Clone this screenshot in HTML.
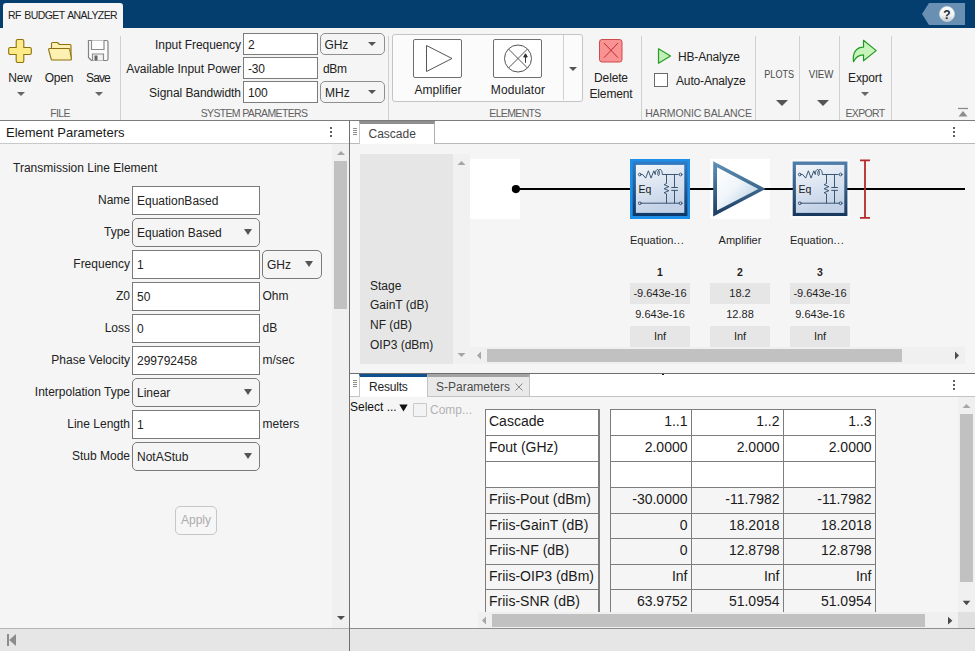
<!DOCTYPE html>
<html>
<head>
<meta charset="utf-8">
<title>RF Budget Analyzer</title>
<style>
html,body{margin:0;padding:0;}
body{width:975px;height:651px;overflow:hidden;position:relative;background:#f5f5f5;font-family:"Liberation Sans",sans-serif;font-size:12px;color:#1f1f1f;}
.a{position:absolute;white-space:nowrap;}
.ts{font-family:"Liberation Sans",sans-serif;font-size:12px;letter-spacing:-0.15px;color:#222;line-height:14px;}
.sec{font-size:10.5px;color:#616161;line-height:12px;letter-spacing:-0.65px;}
.sep{position:absolute;width:1px;background:#d0d0d0;top:36px;height:84px;}
.c{text-align:center;}
.r{text-align:right;}
.inp{position:absolute;box-sizing:border-box;background:#fff;border:1px solid #7c7c7c;}
.dd{position:absolute;box-sizing:border-box;background:#f5f5f5;border:1px solid #8f8f8f;border-radius:4px;}
.tri{position:absolute;width:0;height:0;border-left:4px solid transparent;border-right:4px solid transparent;border-top:4px solid #555;}
.lbl{font-size:12px;color:#222;line-height:14px;}
.cell{position:absolute;box-sizing:border-box;}
</style>
</head>
<body>
<!-- TITLE BAR -->
<div class="a" id="titlebar" style="left:0;top:0;width:975px;height:28px;background:#043e6f;"></div>
<div class="a" id="apptab" style="left:3px;top:3px;width:120px;height:26px;background:#f5f5f5;border-radius:3px 3px 0 0;"></div>
<div class="a ts" style="left:8px;top:8px;font-size:10.5px;letter-spacing:-0.6px;word-spacing:1.2px;color:#222;">RF BUDGET ANALYZER</div>
<!-- help button -->
<svg class="a" style="left:920px;top:2px;" width="48" height="25" viewBox="0 0 48 25">
  <defs><linearGradient id="hg" x1="0" y1="0" x2="0" y2="1"><stop offset="0" stop-color="#ffffff"/><stop offset="0.600" stop-color="#f0f0f0"/><stop offset="1" stop-color="#bfc4ca"/></linearGradient></defs>
  <polygon points="2,12 9,1 45,1 45,23 9,23" fill="#6990b3"/>
  <circle cx="27" cy="12" r="7.500" fill="url(#hg)" stroke="#dfe5ec" stroke-width="0.600"/>
  <text x="27" y="16.500" text-anchor="middle" font-family="Liberation Sans, sans-serif" font-weight="bold" font-size="12" fill="#1a2a3a">?</text>
</svg>

<!-- TOOLSTRIP -->
<div class="a" id="toolstrip" style="left:0;top:28px;width:975px;height:92px;background:#f5f5f5;"></div>
<div class="a" style="left:0;top:120px;width:975px;height:1px;background:#7c7c7c;"></div>

<!-- FILE section -->
<svg class="a" style="left:6px;top:37px;" width="28" height="28" viewBox="0 0 28 28">
  <path d="M11.700,2.500 h4.600 a1.500,1.500 0 0 1 1.500,1.500 v6.500 h6 a1.500,1.500 0 0 1 1.500,1.500 v4 a1.500,1.500 0 0 1 -1.500,1.500 h-6 v6.500 a1.500,1.500 0 0 1 -1.500,1.500 h-4.600 a1.500,1.500 0 0 1 -1.500,-1.500 v-6.500 h-6 a1.500,1.500 0 0 1 -1.500,-1.500 v-4 a1.500,1.500 0 0 1 1.500,-1.500 h6 v-6.500 a1.500,1.500 0 0 1 1.500,-1.500 z" fill="#fdeb87" stroke="#8f700c" stroke-width="1.100"/>
</svg>
<svg class="a" style="left:46px;top:40px;" width="28" height="22" viewBox="0 0 28 22">
  <path d="M5.500,19.500 v-16 a1,1 0 0 1 1,-1 h5 l2,2 h10.500 a1,1 0 0 1 1,1 v13.500 z" fill="#fdf0b0" stroke="#8f700c" stroke-width="1.1" stroke-linejoin="round"/>
  <path d="M3.700,8.500 h19.100 a1,1 0 0 1 1,1.100 l1.600,9.400 a1,1 0 0 1 -1,1 h-18.200 a1,1 0 0 1 -1,-0.800 l-2.600,-9.600 a0.900,0.900 0 0 1 1,-1.100 z" fill="#fdf0b0" stroke="#8f700c" stroke-width="1.1" stroke-linejoin="round"/>
</svg>
<svg class="a" style="left:85px;top:38px;" width="26" height="26" viewBox="0 0 26 26">
  <path d="M3.5,2.5 h18 a1.5,1.5 0 0 1 1.5,1.5 v17 a1.5,1.5 0 0 1 -1.5,1.5 h-15 l-3,-3 v-15.5 a1.5,1.5 0 0 1 0,-1.5 z" fill="#fcfcfc" stroke="#828282" stroke-width="1.200" stroke-linejoin="round"/>
  <path d="M6.5,2.5 v9 h12.5 v-9" fill="#fff" stroke="#8c8c8c" stroke-width="1.2"/>
  <path d="M7.5,22.5 v-6.5 h11 v6.5" fill="#f4f4f4" stroke="#8c8c8c" stroke-width="1.2"/>
  <rect x="9.5" y="17.5" width="3" height="5" fill="#666"/>
</svg>
<div class="a ts c" style="left:0px;top:71px;width:40px;letter-spacing:-0.2px;">New</div>
<div class="a ts c" style="left:39px;top:71px;width:40px;letter-spacing:-0.2px;">Open</div>
<div class="a ts c" style="left:78px;top:71px;width:40px;letter-spacing:-0.9px;">Save</div>
<div class="tri" style="left:17px;top:92px;border-top-color:#666;"></div>
<div class="tri" style="left:95px;top:92px;border-top-color:#666;"></div>
<div class="a sec c" style="left:30px;top:107px;width:60px;">FILE</div>
<div class="sep" style="left:120px;"></div>

<!-- SYSTEM PARAMETERS -->
<div class="a ts r" style="left:121px;top:38px;width:120px;letter-spacing:-0.05px;">Input Frequency</div>
<div class="a ts r" style="left:121px;top:62px;width:120px;letter-spacing:-0.05px;">Available Input Power</div>
<div class="a ts r" style="left:121px;top:86px;width:120px;letter-spacing:-0.05px;">Signal Bandwidth</div>
<div class="inp" style="left:243px;top:33px;width:75px;height:22px;"></div>
<div class="inp" style="left:243px;top:57px;width:75px;height:22px;"></div>
<div class="inp" style="left:243px;top:81px;width:75px;height:22px;"></div>
<div class="a ts" style="left:248px;top:38px;">2</div>
<div class="a ts" style="left:248px;top:62px;">-30</div>
<div class="a ts" style="left:248px;top:86px;">100</div>
<div class="dd" style="left:320px;top:33px;width:65px;height:22px;border-radius:5px;"></div>
<div class="dd" style="left:320px;top:81px;width:65px;height:22px;border-radius:5px;"></div>
<div class="a ts" style="left:324.5px;top:38px;">GHz</div>
<div class="a ts" style="left:323px;top:62px;letter-spacing:-0.3px;">dBm</div>
<div class="a ts" style="left:325px;top:86px;letter-spacing:0.1px;">MHz</div>
<div class="tri" style="left:368px;top:42px;border-top-width:4.5px;"></div>
<div class="tri" style="left:368px;top:90px;border-top-width:4.5px;"></div>
<div class="a sec c" style="left:174px;top:107px;width:160px;">SYSTEM PARAMETERS</div>
<div class="sep" style="left:388px;"></div>

<!-- ELEMENTS -->
<div class="a" style="left:392px;top:34px;width:190.500px;height:68px;box-sizing:border-box;border:1px solid #c4c4c4;border-radius:3px;background:#fbfbfb;"></div>
<div class="a" style="left:563px;top:35px;width:1px;height:65px;background:#d0d0d0;"></div>
<svg class="a" style="left:412px;top:38px;" width="52" height="41" viewBox="0 0 52 41">
  <rect x="1.500" y="1.500" width="48" height="38" rx="1.500" fill="#fff" stroke="#6f6f6f" stroke-width="1"/>
  <path d="M14.500,7.500 v26 l25.500,-13 z" fill="#fff" stroke="#555" stroke-width="1"/>
</svg>
<svg class="a" style="left:492px;top:38px;" width="52" height="41" viewBox="0 0 52 41">
  <rect x="1.500" y="1.500" width="48" height="38" rx="1.500" fill="#fff" stroke="#6f6f6f" stroke-width="1"/>
  <circle cx="26" cy="20.5" r="13.5" fill="#fff" stroke="#555" stroke-width="1"/>
  <path d="M16.5,11 l19,19 M35.5,11 l-19,19" stroke="#555" stroke-width="1" fill="none"/>
  <path d="M33.5,24.800 v-8 M31.700,19 l1.800,-3.200 l1.800,3.200 z" stroke="#333" stroke-width="1" fill="#333"/>
</svg>
<div class="a ts c" style="left:398px;top:83px;width:80px;letter-spacing:0.05px;">Amplifier</div>
<div class="a ts c" style="left:478px;top:83px;width:80px;letter-spacing:0.1px;">Modulator</div>
<div class="tri" style="left:569px;top:67px;"></div>
<svg class="a" style="left:597px;top:37px;" width="28" height="28" viewBox="0 0 28 28">
  <rect x="2.5" y="2.5" width="22.5" height="22.5" rx="2.5" fill="#f99292" stroke="#cf4a4a" stroke-width="1"/>
  <path d="M7,6 l14,14.700 M21,6 l-14,14.700" stroke="#c22f2f" stroke-width="1" fill="none"/>
</svg>
<div class="a ts c" style="left:581px;top:71px;width:60px;">Delete</div>
<div class="a ts c" style="left:581px;top:87px;width:60px;">Element</div>
<div class="a sec c" style="left:465px;top:107px;width:100px;">ELEMENTS</div>
<div class="sep" style="left:641px;"></div>

<!-- HARMONIC BALANCE -->
<svg class="a" style="left:656px;top:47px;" width="18" height="18" viewBox="0 0 18 18">
  <path d="M2.500,1.800 v14.400 l12,-7.200 z" fill="#c4efb4" stroke="#259c25" stroke-width="1.200" stroke-linejoin="round"/>
</svg>
<div class="a ts" style="left:678px;top:50px;">HB-Analyze</div>
<div class="a" style="left:654px;top:73px;width:14px;height:14px;box-sizing:border-box;border:1px solid #6a6a6a;background:#fff;"></div>
<div class="a ts" style="left:676px;top:74px;">Auto-Analyze</div>
<div class="a sec c" style="left:641px;top:107px;width:115px;letter-spacing:-0.15px;">HARMONIC BALANCE</div>
<div class="sep" style="left:755px;"></div>

<!-- PLOTS / VIEW -->
<div class="a sec c" style="left:756px;top:68px;width:46px;font-size:11.5px;letter-spacing:0;color:#4a4a4a;transform:scaleX(0.79);transform-origin:24px 50%;">PLOTS</div>
<div class="tri" style="left:775.5px;top:100px;border-left-width:6px;border-right-width:6px;border-top-width:6px;"></div>
<div class="sep" style="left:799px;"></div>
<div class="a sec c" style="left:800px;top:68px;width:42px;font-size:11.5px;letter-spacing:0;color:#4a4a4a;transform:scaleX(0.84);transform-origin:21.5px 50%;">VIEW</div>
<div class="tri" style="left:817px;top:100px;border-left-width:6px;border-right-width:6px;border-top-width:6px;"></div>
<div class="sep" style="left:839px;"></div>

<!-- EXPORT -->
<svg class="a" style="left:850px;top:38px;" width="30" height="26" viewBox="0 0 30 26">
  <path d="M13.500,2.300 L26.200,12.600 L13.500,22.800 V16.800 C9,16.800 5.600,19 3.500,23.800 C2.400,15 6,9.100 13.500,9.100 Z" fill="#c6f4ba" stroke="#219a21" stroke-width="1.200" stroke-linejoin="round"/>
</svg>
<div class="a ts c" style="left:840px;top:71px;width:50px;">Export</div>
<div class="tri" style="left:861px;top:92px;border-top-color:#666;"></div>
<div class="a sec c" style="left:840px;top:107px;width:50px;">EXPORT</div>
<div class="sep" style="left:891px;"></div>
<!-- collapse icon -->
<svg class="a" style="left:956px;top:105px;" width="14" height="14" viewBox="0 0 14 14">
  <path d="M2,3.5 h10" stroke="#8c8c8c" stroke-width="1.3"/>
  <path d="M2.5,11.5 l4.500,-5.500 l4.500,5.500 z" fill="#8c8c8c"/>
</svg>


<!-- LEFT PANEL -->
<div class="a" style="left:0;top:121px;width:349px;height:22px;background:#fff;"></div>
<div class="a" style="left:0;top:143px;width:349px;height:1px;background:#c9c9c9;"></div>
<div class="a" style="left:332px;top:144px;width:17px;height:484px;background:#f0f0f0;"></div><div class="a" style="left:349px;top:121px;width:1px;height:530px;background:#707070;"></div>
<div class="a" style="left:6px;top:125px;font-size:13px;line-height:16px;color:#1a1a1a;">Element Parameters</div>
<div class="a" style="left:330px;top:127px;width:2px;height:2px;background:#606060;box-shadow:0 4px 0 #606060,0 8px 0 #606060;"></div>
<div class="a lbl" style="left:13px;top:161px;">Transmission Line Element</div>
<div class="a lbl r" style="left:0;top:193px;width:130px;">Name</div>
<div class="inp" style="left:132px;top:186px;width:128px;height:28.5px;border-color:#7a7a7a;"></div>
<div class="a lbl" style="left:137px;top:194px;">EquationBased</div>
<div class="a lbl r" style="left:0;top:225px;width:130px;">Type</div>
<div class="dd" style="left:132px;top:218px;width:128px;height:28.5px;border-radius:5px;border-color:#7a7a7a;"></div>
<div class="tri" style="left:244px;top:229px;border-left-width:4px;border-right-width:4px;border-top:6.5px solid #555;"></div>
<div class="a lbl" style="left:137px;top:226px;">Equation Based</div>
<div class="a lbl r" style="left:0;top:257px;width:130px;">Frequency</div>
<div class="inp" style="left:132px;top:250px;width:128px;height:28.5px;border-color:#7a7a7a;"></div>
<div class="a lbl" style="left:137px;top:258px;">1</div>
<div class="dd" style="left:262px;top:250px;width:60px;height:29px;border-radius:5px;border-color:#7a7a7a;"></div>
<div class="a lbl" style="left:267px;top:258px;">GHz</div>
<div class="tri" style="left:305px;top:261px;border-left-width:4px;border-right-width:4px;border-top:6.5px solid #555;"></div>
<div class="a lbl r" style="left:0;top:289px;width:130px;">Z0</div>
<div class="inp" style="left:132px;top:282px;width:128px;height:28.5px;border-color:#7a7a7a;"></div>
<div class="a lbl" style="left:137px;top:290px;">50</div>
<div class="a lbl" style="left:262.5px;top:289px;">Ohm</div>
<div class="a lbl r" style="left:0;top:321px;width:130px;">Loss</div>
<div class="inp" style="left:132px;top:314px;width:128px;height:28.5px;border-color:#7a7a7a;"></div>
<div class="a lbl" style="left:137px;top:322px;">0</div>
<div class="a lbl" style="left:262.5px;top:321px;">dB</div>
<div class="a lbl r" style="left:0;top:353px;width:130px;">Phase Velocity</div>
<div class="inp" style="left:132px;top:346px;width:128px;height:28.5px;border-color:#7a7a7a;"></div>
<div class="a lbl" style="left:137px;top:354px;">299792458</div>
<div class="a lbl" style="left:262.5px;top:353px;">m/sec</div>
<div class="a lbl r" style="left:0;top:385px;width:130px;">Interpolation Type</div>
<div class="dd" style="left:132px;top:378px;width:128px;height:28.5px;border-radius:5px;border-color:#7a7a7a;"></div>
<div class="tri" style="left:244px;top:389px;border-left-width:4px;border-right-width:4px;border-top:6.5px solid #555;"></div>
<div class="a lbl" style="left:137px;top:386px;">Linear</div>
<div class="a lbl r" style="left:0;top:417px;width:130px;">Line Length</div>
<div class="inp" style="left:132px;top:410px;width:128px;height:28.5px;border-color:#7a7a7a;"></div>
<div class="a lbl" style="left:137px;top:418px;">1</div>
<div class="a lbl" style="left:262.5px;top:417px;">meters</div>
<div class="a lbl r" style="left:0;top:449px;width:130px;">Stub Mode</div>
<div class="dd" style="left:132px;top:442px;width:128px;height:28.5px;border-radius:5px;border-color:#7a7a7a;"></div>
<div class="tri" style="left:244px;top:453px;border-left-width:4px;border-right-width:4px;border-top:6.5px solid #555;"></div>
<div class="a lbl" style="left:137px;top:450px;">NotAStub</div>
<div class="a" style="left:175px;top:506px;width:42px;height:29px;box-sizing:border-box;border:1px solid #c6c6c6;border-radius:5px;background:#f6f6f6;"></div>
<div class="a lbl c" style="left:175px;top:513px;width:42px;color:#acacac;">Apply</div>
<svg class="a" style="left:336px;top:150px;" width="10" height="6" viewBox="0 0 10 6"><path d="M1,5 l4,-4 l4,4 z" fill="#a6a6a6"/></svg>
<div class="a" style="left:334px;top:161px;width:13px;height:148px;background:#c1c1c1;"></div>
<svg class="a" style="left:336px;top:615px;" width="10" height="6" viewBox="0 0 10 6"><path d="M1,1 l4,4 l4,-4 z" fill="#4d4d4d"/></svg>

<!-- CASCADE -->
<div class="a" style="left:350px;top:121px;width:625px;height:22px;background:#fff;"></div>
<div class="a" style="left:350px;top:143px;width:625px;height:1px;background:#b9b9b9;"></div>
<div class="a" style="left:359px;top:121px;width:76px;height:23px;box-sizing:border-box;background:#fff;border-left:1px solid #c8c8c8;border-right:1px solid #b0b0b0;border-top:3px solid #8e8e8e;"></div>
<div class="a lbl" style="left:368.5px;top:127px;color:#444;">Cascade</div>
<div class="a" style="left:353px;top:128px;width:4px;height:1px;background:#8e8e8e;box-shadow:0 2px 0 #8e8e8e,0 4px 0 #8e8e8e,0 6px 0 #8e8e8e;"></div>
<div class="a" style="left:953px;top:127px;width:2px;height:2px;background:#606060;box-shadow:0 4px 0 #606060,0 8px 0 #606060;"></div>
<div class="a" style="left:360px;top:154px;width:93px;height:210px;background:#e6e6e6;"></div>
<div class="a" style="left:453px;top:154px;width:17px;height:210px;background:#f1f1f1;"></div>
<div class="a lbl" style="left:370px;top:279px;">Stage</div>
<div class="a lbl" style="left:370px;top:298px;">GainT (dB)</div>
<div class="a lbl" style="left:370px;top:318px;">NF (dB)</div>
<div class="a lbl" style="left:370px;top:338px;">OIP3 (dBm)</div>
<svg class="a" style="left:457px;top:160px;" width="9" height="6" viewBox="0 0 9 6"><path d="M0.500,5 l4,-4 l4,4 z" fill="#a6a6a6"/></svg>
<svg class="a" style="left:457px;top:352px;" width="9" height="6" viewBox="0 0 9 6"><path d="M0.500,1 l4,4 l4,-4 z" fill="#a6a6a6"/></svg>
<div class="a" style="left:470px;top:159px;width:50px;height:60px;background:#fff;"></div>
<div class="a" style="left:710px;top:159px;width:60px;height:60px;background:#fff;"></div>
<div class="a" style="left:790px;top:159px;width:60px;height:60px;background:#f9f9f9;"></div>
<div class="a" style="left:515px;top:188px;width:450px;height:2px;background:#000;"></div>
<svg class="a" style="left:510px;top:183px;" width="12" height="12" viewBox="0 0 12 12"><circle cx="5.900" cy="6.100" r="4.100" fill="#000"/></svg>
<svg class="a" style="left:630px;top:159px;" width="60" height="60" viewBox="0 0 60 60"><defs><linearGradient id="g630b" x1="0" y1="0" x2="0" y2="1"><stop offset="0" stop-color="#2f7cc4"/><stop offset="1" stop-color="#0e3968"/></linearGradient><linearGradient id="g630f" x1="0" y1="0" x2="0.300" y2="1"><stop offset="0" stop-color="#f3f6fa"/><stop offset="1" stop-color="#c3d2e7"/></linearGradient></defs><rect x="0" y="0" width="60" height="60" fill="#1d8fe8"/><rect x="2.700" y="2.500" width="54.700" height="54.500" fill="url(#g630b)"/><rect x="5.900" y="5.900" width="48.400" height="48" fill="url(#g630f)"/><path d="M11.200,15.500 h1.500 l3,3.600 l2.700,-7.300 l2.700,7.300 l2.700,-7.300 l1.400,3.700 c0.300,-6.500 4.200,-6.500 4.200,-1 c0,2.600 -1.700,2.600 -1.700,0.300 c0.200,-6 4.600,-6 4.600,0.700 h15.900" stroke="#34506c" stroke-width="0.950" fill="none" stroke-linejoin="round" stroke-linecap="round"/><circle cx="9.800" cy="15.500" r="1.400" stroke="#34506c" stroke-width="0.950" fill="none" stroke-linejoin="round" stroke-linecap="round"/><circle cx="50.600" cy="15.500" r="1.400" stroke="#34506c" stroke-width="0.950" fill="none" stroke-linejoin="round" stroke-linecap="round"/><path d="M11.200,44.200 h38" stroke="#34506c" stroke-width="0.950" fill="none" stroke-linejoin="round" stroke-linecap="round"/><circle cx="9.800" cy="44.200" r="1.400" stroke="#34506c" stroke-width="0.950" fill="none" stroke-linejoin="round" stroke-linecap="round"/><circle cx="50.600" cy="44.200" r="1.400" stroke="#34506c" stroke-width="0.950" fill="none" stroke-linejoin="round" stroke-linecap="round"/><path d="M36.500,15.500 v9 l-2.400,1.200 l4.800,2 l-4.800,2 l4.800,2 l-4.800,2 l2.400,1.200 v9.300" stroke="#34506c" stroke-width="0.950" fill="none" stroke-linejoin="round" stroke-linecap="round"/><path d="M44.500,15.500 v13 M41.700,28.500 h5.800 M41.700,31.400 h5.800 M44.500,31.400 v12.800" stroke="#34506c" stroke-width="0.950" fill="none" stroke-linejoin="round" stroke-linecap="round"/><text x="8.500" y="33.600" font-family="Liberation Sans, sans-serif" font-size="10.500" fill="#1a1a1a">Eq</text></svg>
<svg class="a" style="left:710px;top:159px;" width="60" height="60" viewBox="0 0 60 60"><defs><linearGradient id="ab" x1="0" y1="0" x2="0" y2="1"><stop offset="0" stop-color="#5f93ba"/><stop offset="1" stop-color="#1b3a5f"/></linearGradient><linearGradient id="af" x1="0" y1="0" x2="1" y2="1"><stop offset="0" stop-color="#ffffff"/><stop offset="0.450" stop-color="#f0f5fa"/><stop offset="1" stop-color="#a9c2dd"/></linearGradient></defs><polygon points="3.200,2.200 3.200,57.500 55.700,29.900" fill="url(#ab)"/><polygon points="7,8.300 7,51.400 48.300,29.900" fill="url(#af)"/></svg>
<svg class="a" style="left:790px;top:159px;" width="60" height="60" viewBox="0 0 60 60"><defs><linearGradient id="g790b" x1="0" y1="0" x2="0" y2="1"><stop offset="0" stop-color="#4f7fab"/><stop offset="1" stop-color="#17385d"/></linearGradient><linearGradient id="g790f" x1="0" y1="0" x2="0.300" y2="1"><stop offset="0" stop-color="#f3f6fa"/><stop offset="1" stop-color="#c3d2e7"/></linearGradient></defs><rect x="2.700" y="2.500" width="54.700" height="54.500" fill="url(#g790b)"/><rect x="5.900" y="5.900" width="48.400" height="48" fill="url(#g790f)"/><path d="M11.200,15.500 h1.500 l3,3.600 l2.700,-7.300 l2.700,7.300 l2.700,-7.300 l1.400,3.700 c0.300,-6.500 4.200,-6.500 4.200,-1 c0,2.600 -1.700,2.600 -1.700,0.300 c0.200,-6 4.600,-6 4.600,0.700 h15.900" stroke="#34506c" stroke-width="0.950" fill="none" stroke-linejoin="round" stroke-linecap="round"/><circle cx="9.800" cy="15.500" r="1.400" stroke="#34506c" stroke-width="0.950" fill="none" stroke-linejoin="round" stroke-linecap="round"/><circle cx="50.600" cy="15.500" r="1.400" stroke="#34506c" stroke-width="0.950" fill="none" stroke-linejoin="round" stroke-linecap="round"/><path d="M11.200,44.200 h38" stroke="#34506c" stroke-width="0.950" fill="none" stroke-linejoin="round" stroke-linecap="round"/><circle cx="9.800" cy="44.200" r="1.400" stroke="#34506c" stroke-width="0.950" fill="none" stroke-linejoin="round" stroke-linecap="round"/><circle cx="50.600" cy="44.200" r="1.400" stroke="#34506c" stroke-width="0.950" fill="none" stroke-linejoin="round" stroke-linecap="round"/><path d="M36.500,15.500 v9 l-2.400,1.200 l4.800,2 l-4.800,2 l4.800,2 l-4.800,2 l2.400,1.200 v9.300" stroke="#34506c" stroke-width="0.950" fill="none" stroke-linejoin="round" stroke-linecap="round"/><path d="M44.500,15.500 v13 M41.700,28.500 h5.800 M41.700,31.400 h5.800 M44.500,31.400 v12.800" stroke="#34506c" stroke-width="0.950" fill="none" stroke-linejoin="round" stroke-linecap="round"/><text x="8.500" y="33.600" font-family="Liberation Sans, sans-serif" font-size="10.500" fill="#1a1a1a">Eq</text></svg>
<svg class="a" style="left:858px;top:158px;" width="14" height="62" viewBox="0 0 14 62"><path d="M2,2.300 h10 M2,59.800 h10 M7,2 v58" stroke="#b52b2b" stroke-width="1.800" fill="none"/></svg>
<div class="a" style="left:630px;top:234px;font-size:11px;line-height:13px;">Equation<span style="letter-spacing:0.6px;">...</span></div>
<div class="a c" style="left:710px;top:234px;width:60px;font-size:11px;line-height:13px;">Amplifier</div>
<div class="a" style="left:790px;top:234px;font-size:11px;line-height:13px;">Equation<span style="letter-spacing:0.6px;">...</span></div>
<div class="a c" style="left:630px;top:266px;width:60px;font-size:10.5px;line-height:13px;font-weight:bold;">1</div>
<div class="a" style="left:630px;top:283px;width:60px;height:21px;background:#e6e6e6;"></div>
<div class="a" style="left:630px;top:326px;width:60px;height:21px;background:#e6e6e6;"></div>
<div class="a c" style="left:630px;top:287px;width:60px;font-size:11px;line-height:13px;">-9.643e-16</div>
<div class="a c" style="left:630px;top:308px;width:60px;font-size:11px;line-height:13px;">9.643e-16</div>
<div class="a c" style="left:630px;top:330px;width:60px;font-size:11px;line-height:13px;">Inf</div>
<div class="a c" style="left:710px;top:266px;width:60px;font-size:10.5px;line-height:13px;font-weight:bold;">2</div>
<div class="a" style="left:710px;top:283px;width:60px;height:21px;background:#e6e6e6;"></div>
<div class="a" style="left:710px;top:326px;width:60px;height:21px;background:#e6e6e6;"></div>
<div class="a c" style="left:710px;top:287px;width:60px;font-size:11px;line-height:13px;">18.2</div>
<div class="a c" style="left:710px;top:308px;width:60px;font-size:11px;line-height:13px;">12.88</div>
<div class="a c" style="left:710px;top:330px;width:60px;font-size:11px;line-height:13px;">Inf</div>
<div class="a c" style="left:790px;top:266px;width:60px;font-size:10.5px;line-height:13px;font-weight:bold;">3</div>
<div class="a" style="left:790px;top:283px;width:60px;height:21px;background:#e6e6e6;"></div>
<div class="a" style="left:790px;top:326px;width:60px;height:21px;background:#e6e6e6;"></div>
<div class="a c" style="left:790px;top:287px;width:60px;font-size:11px;line-height:13px;">-9.643e-16</div>
<div class="a c" style="left:790px;top:308px;width:60px;font-size:11px;line-height:13px;">9.643e-16</div>
<div class="a c" style="left:790px;top:330px;width:60px;font-size:11px;line-height:13px;">Inf</div>
<div class="a" style="left:470px;top:347px;width:495px;height:17px;background:#f0f0f0;"></div>
<div class="a" style="left:487px;top:349px;width:415px;height:13px;background:#c1c1c1;"></div>
<svg class="a" style="left:476px;top:351px;" width="6" height="9" viewBox="0 0 6 9"><path d="M5,0.500 l-4,4 l4,4 z" fill="#a6a6a6"/></svg>
<svg class="a" style="left:954px;top:351px;" width="6" height="9" viewBox="0 0 6 9"><path d="M1,0.500 l4,4 l-4,4 z" fill="#4d4d4d"/></svg>

<!-- RESULTS -->
<div class="a" style="left:350px;top:373px;width:625px;height:1px;background:#6e6e6e;"></div>
<div class="a" style="left:350px;top:374px;width:625px;height:22px;background:#fff;"></div>
<div class="a" style="left:350px;top:396px;width:625px;height:1px;background:#c4c4c4;"></div>
<div class="a" style="left:359px;top:374px;width:68px;height:23px;box-sizing:border-box;background:#fff;border-left:1px solid #c8c8c8;border-top:3px solid #10508e;"></div>
<div class="a" style="left:427px;top:374px;width:103px;height:23px;box-sizing:border-box;background:#e9e9e9;border-top:3px solid #a3a3a3;border-right:1px solid #c4c4c4;border-bottom:1px solid #c4c4c4;border-left:1px solid #c4c4c4;"></div>
<div class="a" style="left:662px;top:374px;width:2px;height:1px;background:#111;"></div>
<div class="a lbl" style="left:369px;top:380px;letter-spacing:-0.2px;">Results</div>
<div class="a lbl" style="left:436px;top:380px;color:#4a4a4a;">S-Parameters</div>
<svg class="a" style="left:514px;top:382px;" width="10" height="10" viewBox="0 0 10 10"><path d="M1.500,1.500 l7,7 M8.500,1.500 l-7,7" stroke="#7a7a7a" stroke-width="0.900" fill="none"/></svg>
<div class="a" style="left:353px;top:380px;width:4px;height:1px;background:#8e8e8e;box-shadow:0 2px 0 #8e8e8e,0 4px 0 #8e8e8e,0 6px 0 #8e8e8e;"></div>
<div class="a" style="left:953px;top:380px;width:2px;height:2px;background:#606060;box-shadow:0 4px 0 #606060,0 8px 0 #606060;"></div>
<div class="a lbl" style="left:350px;top:400px;color:#111;">Select ...</div>
<svg class="a" style="left:399px;top:404px;" width="9" height="8" viewBox="0 0 9 8"><path d="M0.300,0.500 h8.400 l-4.200,7 z" fill="#111"/></svg>
<div class="a" style="left:413px;top:403px;width:14px;height:14px;box-sizing:border-box;border:1px solid #c9c9c9;background:#f3f3f3;border-radius:1px;"></div>
<div class="a lbl" style="left:430px;top:403px;color:#b3b3b3;">Comp...</div>
<div class="a" id="tblclip" style="left:480px;top:400px;width:400px;height:212px;overflow:hidden;">
<div class="a" style="left:5px;top:9px;width:114px;height:26px;background:#fff;"></div>
<div class="a" style="left:130px;top:9px;width:265px;height:26px;background:#fff;"></div>
<div class="a" style="left:9px;top:12.5px;font-size:14px;line-height:16px;color:#1a1a1a;">Cascade</div>
<div class="a r" style="left:130px;top:12.5px;width:77.5px;font-size:14px;line-height:16px;color:#1a1a1a;">1..1</div>
<div class="a r" style="left:211px;top:12.5px;width:88.5px;font-size:14px;line-height:16px;color:#1a1a1a;">1..2</div>
<div class="a r" style="left:303px;top:12.5px;width:88.5px;font-size:14px;line-height:16px;color:#1a1a1a;">1..3</div>
<div class="a" style="left:5px;top:35px;width:114px;height:26px;background:#fff;"></div>
<div class="a" style="left:130px;top:35px;width:265px;height:26px;background:#fff;"></div>
<div class="a" style="left:9px;top:38.5px;font-size:14px;line-height:16px;color:#1a1a1a;">Fout (GHz)</div>
<div class="a r" style="left:130px;top:38.5px;width:77.5px;font-size:14px;line-height:16px;color:#1a1a1a;">2.0000</div>
<div class="a r" style="left:211px;top:38.5px;width:88.5px;font-size:14px;line-height:16px;color:#1a1a1a;">2.0000</div>
<div class="a r" style="left:303px;top:38.5px;width:88.5px;font-size:14px;line-height:16px;color:#1a1a1a;">2.0000</div>
<div class="a" style="left:5px;top:61px;width:114px;height:26px;background:#fff;"></div>
<div class="a" style="left:130px;top:61px;width:265px;height:26px;background:#fff;"></div>
<div class="a" style="left:9px;top:64.5px;font-size:14px;line-height:16px;color:#1a1a1a;"></div>
<div class="a r" style="left:130px;top:64.5px;width:77.5px;font-size:14px;line-height:16px;color:#1a1a1a;"></div>
<div class="a r" style="left:211px;top:64.5px;width:88.5px;font-size:14px;line-height:16px;color:#1a1a1a;"></div>
<div class="a r" style="left:303px;top:64.5px;width:88.5px;font-size:14px;line-height:16px;color:#1a1a1a;"></div>
<div class="a" style="left:5px;top:87px;width:114px;height:26px;background:#f5f5f5;"></div>
<div class="a" style="left:130px;top:87px;width:265px;height:26px;background:#f5f5f5;"></div>
<div class="a" style="left:9px;top:90.5px;font-size:14px;line-height:16px;color:#1a1a1a;">Friis-Pout (dBm)</div>
<div class="a r" style="left:130px;top:90.5px;width:77.5px;font-size:14px;line-height:16px;color:#1a1a1a;">-30.0000</div>
<div class="a r" style="left:211px;top:90.5px;width:88.5px;font-size:14px;line-height:16px;color:#1a1a1a;">-11.7982</div>
<div class="a r" style="left:303px;top:90.5px;width:88.5px;font-size:14px;line-height:16px;color:#1a1a1a;">-11.7982</div>
<div class="a" style="left:5px;top:113px;width:114px;height:25px;background:#f5f5f5;"></div>
<div class="a" style="left:130px;top:113px;width:265px;height:25px;background:#f5f5f5;"></div>
<div class="a" style="left:9px;top:116.5px;font-size:14px;line-height:16px;color:#1a1a1a;">Friis-GainT (dB)</div>
<div class="a r" style="left:130px;top:116.5px;width:77.5px;font-size:14px;line-height:16px;color:#1a1a1a;">0</div>
<div class="a r" style="left:211px;top:116.5px;width:88.5px;font-size:14px;line-height:16px;color:#1a1a1a;">18.2018</div>
<div class="a r" style="left:303px;top:116.5px;width:88.5px;font-size:14px;line-height:16px;color:#1a1a1a;">18.2018</div>
<div class="a" style="left:5px;top:138px;width:114px;height:26px;background:#f5f5f5;"></div>
<div class="a" style="left:130px;top:138px;width:265px;height:26px;background:#f5f5f5;"></div>
<div class="a" style="left:9px;top:141.5px;font-size:14px;line-height:16px;color:#1a1a1a;">Friis-NF (dB)</div>
<div class="a r" style="left:130px;top:141.5px;width:77.5px;font-size:14px;line-height:16px;color:#1a1a1a;">0</div>
<div class="a r" style="left:211px;top:141.5px;width:88.5px;font-size:14px;line-height:16px;color:#1a1a1a;">12.8798</div>
<div class="a r" style="left:303px;top:141.5px;width:88.5px;font-size:14px;line-height:16px;color:#1a1a1a;">12.8798</div>
<div class="a" style="left:5px;top:164px;width:114px;height:25.5px;background:#f5f5f5;"></div>
<div class="a" style="left:130px;top:164px;width:265px;height:25.5px;background:#f5f5f5;"></div>
<div class="a" style="left:9px;top:167.5px;font-size:14px;line-height:16px;color:#1a1a1a;">Friis-OIP3 (dBm)</div>
<div class="a r" style="left:130px;top:167.5px;width:77.5px;font-size:14px;line-height:16px;color:#1a1a1a;">Inf</div>
<div class="a r" style="left:211px;top:167.5px;width:88.5px;font-size:14px;line-height:16px;color:#1a1a1a;">Inf</div>
<div class="a r" style="left:303px;top:167.5px;width:88.5px;font-size:14px;line-height:16px;color:#1a1a1a;">Inf</div>
<div class="a" style="left:5px;top:189px;width:114px;height:25.5px;background:#f5f5f5;"></div>
<div class="a" style="left:130px;top:189px;width:265px;height:25.5px;background:#f5f5f5;"></div>
<div class="a" style="left:9px;top:193.0px;font-size:14px;line-height:16px;color:#1a1a1a;">Friis-SNR (dB)</div>
<div class="a r" style="left:130px;top:193.0px;width:77.5px;font-size:14px;line-height:16px;color:#1a1a1a;">63.9752</div>
<div class="a r" style="left:211px;top:193.0px;width:88.5px;font-size:14px;line-height:16px;color:#1a1a1a;">51.0954</div>
<div class="a r" style="left:303px;top:193.0px;width:88.5px;font-size:14px;line-height:16px;color:#1a1a1a;">51.0954</div>
<div class="a" style="left:5px;top:215px;width:114px;height:26px;background:#f5f5f5;"></div>
<div class="a" style="left:130px;top:215px;width:265px;height:26px;background:#f5f5f5;"></div>
<div class="a" style="left:5px;top:9px;width:115px;height:1px;background:#7d7d7d;"></div>
<div class="a" style="left:130px;top:9px;width:266px;height:1px;background:#7d7d7d;"></div>
<div class="a" style="left:5px;top:35px;width:115px;height:1px;background:#7d7d7d;"></div>
<div class="a" style="left:130px;top:35px;width:266px;height:1px;background:#7d7d7d;"></div>
<div class="a" style="left:5px;top:61px;width:115px;height:1px;background:#7d7d7d;"></div>
<div class="a" style="left:130px;top:61px;width:266px;height:1px;background:#7d7d7d;"></div>
<div class="a" style="left:5px;top:87px;width:115px;height:1px;background:#7d7d7d;"></div>
<div class="a" style="left:130px;top:87px;width:266px;height:1px;background:#7d7d7d;"></div>
<div class="a" style="left:5px;top:113px;width:115px;height:1px;background:#7d7d7d;"></div>
<div class="a" style="left:130px;top:113px;width:266px;height:1px;background:#7d7d7d;"></div>
<div class="a" style="left:5px;top:138px;width:115px;height:1px;background:#7d7d7d;"></div>
<div class="a" style="left:130px;top:138px;width:266px;height:1px;background:#7d7d7d;"></div>
<div class="a" style="left:5px;top:164px;width:115px;height:1px;background:#7d7d7d;"></div>
<div class="a" style="left:130px;top:164px;width:266px;height:1px;background:#7d7d7d;"></div>
<div class="a" style="left:5px;top:189px;width:115px;height:1px;background:#7d7d7d;"></div>
<div class="a" style="left:130px;top:189px;width:266px;height:1px;background:#7d7d7d;"></div>
<div class="a" style="left:5px;top:215px;width:115px;height:1px;background:#7d7d7d;"></div>
<div class="a" style="left:130px;top:215px;width:266px;height:1px;background:#7d7d7d;"></div>
<div class="a" style="left:5px;top:241px;width:115px;height:1px;background:#7d7d7d;"></div>
<div class="a" style="left:130px;top:241px;width:266px;height:1px;background:#7d7d7d;"></div>
<div class="a" style="left:5px;top:9px;width:1px;height:240px;background:#7d7d7d;"></div>
<div class="a" style="left:118px;top:9px;width:2px;height:240px;background:#7d7d7d;"></div>
<div class="a" style="left:130px;top:9px;width:1px;height:240px;background:#7d7d7d;"></div>
<div class="a" style="left:211px;top:9px;width:1px;height:240px;background:#7d7d7d;"></div>
<div class="a" style="left:303px;top:9px;width:1px;height:240px;background:#7d7d7d;"></div>
<div class="a" style="left:395px;top:9px;width:1px;height:240px;background:#7d7d7d;"></div>
</div>
<div class="a" style="left:958px;top:397px;width:17px;height:215px;background:#f0f0f0;"></div>
<svg class="a" style="left:962px;top:403px;" width="9" height="6" viewBox="0 0 9 6"><path d="M0.500,5 l4,-4 l4,4 z" fill="#a6a6a6"/></svg>
<div class="a" style="left:960px;top:414px;width:13px;height:168px;background:#c1c1c1;"></div>
<svg class="a" style="left:962px;top:600px;" width="9" height="6" viewBox="0 0 9 6"><path d="M0.700,0.700 h7.600 l-3.800,4.600 z" fill="#4a4a4a"/></svg>
<div class="a" style="left:478px;top:612px;width:480px;height:16px;background:#f0f0f0;"></div>
<div class="a" style="left:958px;top:612px;width:17px;height:16px;background:#e0e0e0;"></div>
<div class="a" style="left:492px;top:614px;width:433px;height:12.5px;background:#c1c1c1;"></div>
<svg class="a" style="left:481px;top:616px;" width="6" height="9" viewBox="0 0 6 9"><path d="M5,0.500 l-4,4 l4,4 z" fill="#a6a6a6"/></svg>
<svg class="a" style="left:947px;top:616px;" width="6" height="9" viewBox="0 0 6 9"><path d="M1,0.800 l4.400,3.900 l-4.400,3.900 z" fill="#4a4a4a"/></svg>

<!-- STATUS BAR -->
<div class="a" style="left:0;top:628px;width:975px;height:23px;background:#e6e6e6;"></div>
<div class="a" style="left:0;top:628px;width:349px;height:1px;background:#b4b4b4;"></div><div class="a" style="left:350px;top:628px;width:625px;height:1px;background:#8e8e8e;"></div>
<div class="a" style="left:349px;top:628px;width:1px;height:23px;background:#707070;"></div>
<svg class="a" style="left:6px;top:633px;" width="12" height="14" viewBox="0 0 12 14"><rect x="1" y="1" width="2" height="12" fill="#8c8c8c"/><path d="M10,1 v12 l-6.800,-6 z" fill="#8c8c8c"/></svg>
</body>
</html>
